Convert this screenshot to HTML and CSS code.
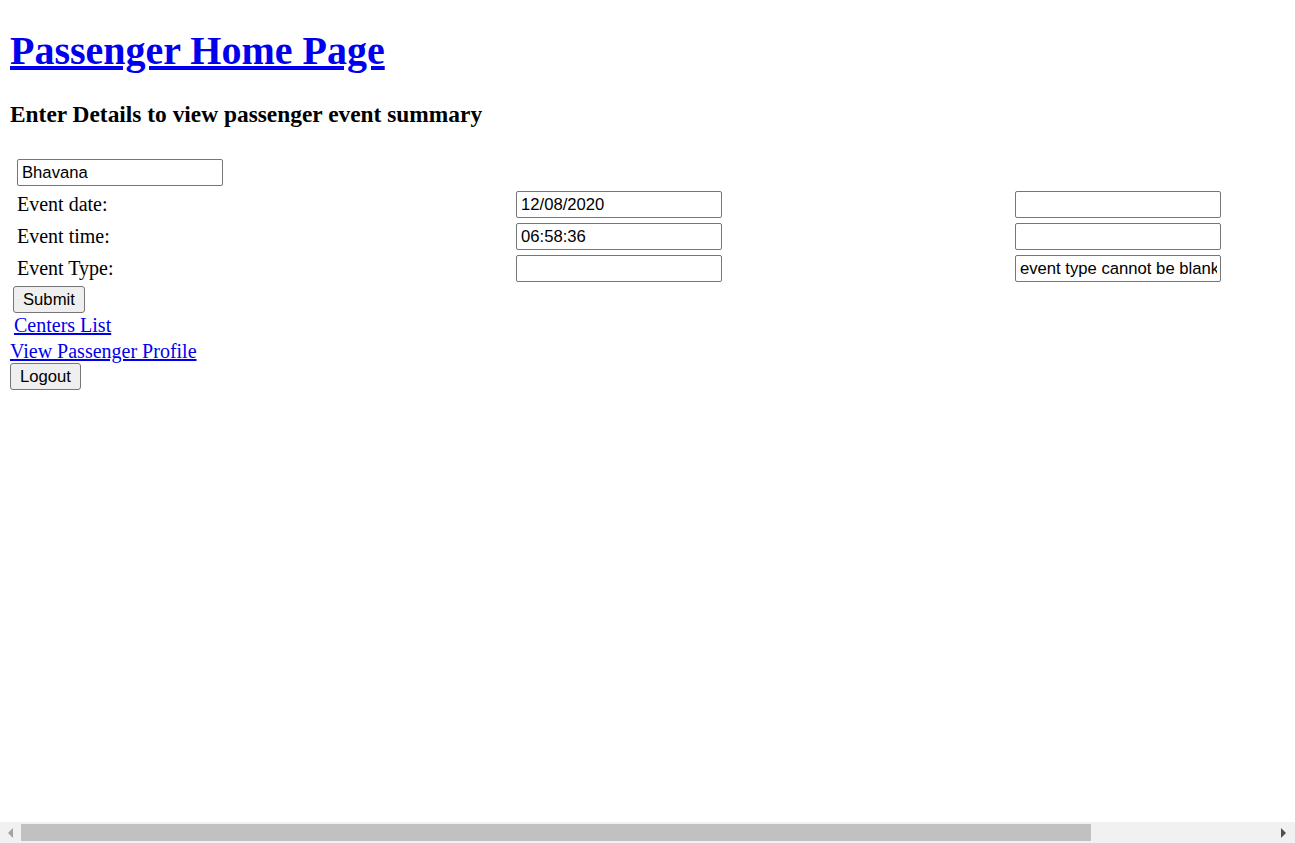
FILE: index.html
```html
<!DOCTYPE html>
<html>
<head>
<meta charset="utf-8">
<title>Passenger Home Page</title>
<link rel="stylesheet" href="styles.css">
</head>
<body>
<div class="page">
  <h1 class="title"><a href="#">Passenger Home Page</a></h1>
  <h3 class="subtitle">Enter Details to view passenger event summary</h3>
  <form class="form">
    <div class="grid">
      <div class="cell"><input class="field" type="text" value="Bhavana"></div>
      <div class="cell"></div>
      <div class="cell"></div>

      <div class="cell label">Event date:</div>
      <div class="cell"><input class="field" type="text" value="12/08/2020"></div>
      <div class="cell"><input class="field" type="text" value=""></div>

      <div class="cell label">Event time:</div>
      <div class="cell"><input class="field" type="text" value="06:58:36"></div>
      <div class="cell"><input class="field" type="text" value=""></div>

      <div class="cell label">Event Type:</div>
      <div class="cell"><input class="field" type="text" value=""></div>
      <div class="cell"><input class="field" type="text" value="event type cannot be blank"></div>
    </div>
    <div class="submit-row"><button class="btn" type="button">Submit</button></div>
    <div class="centers-row"><a href="#">Centers List</a></div>
  </form>
  <div class="profile-row"><a href="#">View Passenger Profile</a></div>
  <div class="logout-row"><button class="btn" type="button">Logout</button></div>
</div>

<div class="hscroll">
  <div class="arrow arrow-left"></div>
  <div class="thumb"></div>
  <div class="arrow arrow-right"></div>
</div>
</body>
</html>
```
FILE: styles.css
```css
html, body {
  margin: 0;
  padding: 0;
  background: #ffffff;
}

body {
  font-family: "Liberation Serif", "Times New Roman", serif;
  font-size: 20px;
  color: #000000;
}

a {
  color: #0000ee;
  text-decoration: underline;
}

.page {
  padding: 0 10px;
}

.title {
  font-size: 40px;
  font-weight: bold;
  line-height: 46px;
  margin: 27.5px 0 0 0;
}

.subtitle {
  font-size: 23.4px;
  font-weight: bold;
  line-height: 27px;
  margin: 27.6px 0 0 0;
}

.form {
  margin: 31.1px 0 0 0;
  padding-left: 3px;
}

.grid {
  display: grid;
  grid-template-columns: 499px 499px 206px;
  grid-auto-rows: 27px;
  row-gap: 5px;
  margin-left: 4px;
}

.cell {
  display: flex;
  align-items: center;
  line-height: 23px;
}

.field {
  box-sizing: border-box;
  width: 206px;
  height: 27px;
  margin: 0;
  padding: 0 3px 0 4px;
  border: 1px solid #767676;
  border-radius: 2px;
  background: #ffffff;
  font-family: "Liberation Sans", Arial, sans-serif;
  font-size: 16.67px;
  color: #000000;
  outline: none;
}

.btn {
  box-sizing: border-box;
  height: 27px;
  margin: 0;
  padding: 0 9px;
  border: 1px solid #767676;
  border-radius: 3px;
  background: #efefef;
  font-family: "Liberation Sans", Arial, sans-serif;
  font-size: 16.67px;
  color: #000000;
  line-height: 23px;
}

.submit-row {
  display: flex;
  margin-top: 4px;
  height: 27px;
}

.centers-row {
  line-height: 23px;
  margin-top: 1px;
  padding-left: 1px;
}

.profile-row {
  line-height: 23px;
  margin-top: 3px;
}

.logout-row {
  display: flex;
  margin-top: 0;
  height: 27px;
}

.hscroll {
  position: fixed;
  left: 0;
  right: 0;
  bottom: 0;
  height: 21px;
  background: #f1f1f1;
}

.thumb {
  position: absolute;
  left: 21px;
  width: 1070px;
  top: 2px;
  height: 17px;
  background: #c1c1c1;
}

.arrow {
  position: absolute;
  top: 6px;
  width: 0;
  height: 0;
  border-top: 5px solid transparent;
  border-bottom: 5px solid transparent;
}

.arrow-left {
  left: 8px;
  border-right: 5px solid #a3a3a3;
}

.arrow-right {
  right: 9px;
  border-left: 5px solid #505050;
}
```
